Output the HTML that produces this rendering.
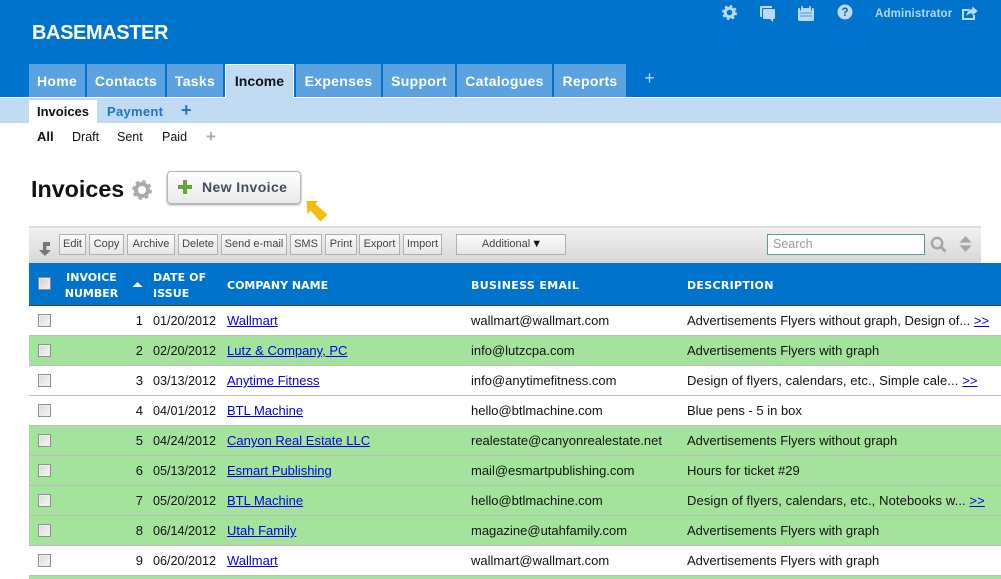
<!DOCTYPE html>
<html><head><meta charset="utf-8"><style>
*{box-sizing:border-box}
html,body{margin:0;padding:0;width:1001px;height:579px;overflow:hidden}
body{position:relative;background:#fff;font-family:"Liberation Sans",Arial,sans-serif;font-size:12px;color:#111}
.a{position:absolute;white-space:nowrap}
.tab{position:absolute;top:64px;height:33px;background:#5aa3e0;color:#fff;font-weight:bold;font-size:14px;letter-spacing:.3px;line-height:35px;text-align:center}
.btn{position:absolute;top:234px;height:21px;border:1px solid #b0b0b0;background:linear-gradient(#fbfbfb,#e6e6e6);color:#444;font-size:11px;line-height:19px;text-align:center}
.th{position:absolute;color:#fff;font:bold 11px/16px "DejaVu Sans",sans-serif;white-space:nowrap}
.row{position:absolute;left:29px;width:972px;height:30px;border-bottom:1px solid #bbb}
.g{background:#a3e39b}
.cb{position:absolute;left:9px;top:8px;width:13px;height:13px;border:1px solid #8f8f8f;background:linear-gradient(135deg,#d8d8d8,#f8f8f8);box-shadow:inset 0 0 0 1px #eee}
.c{position:absolute;top:0;line-height:29px;font-size:13px;white-space:nowrap}
.d{font-size:12.600px;line-height:31px}
.w{letter-spacing:.1px}
a{color:#00e;text-decoration:underline}
</style></head><body>
<div class="a" style="left:0;top:0;width:1001px;height:97px;background:#0074cc"></div>
<div class="a" style="left:32px;top:20px;color:#fff;font-weight:bold;font-size:20px;line-height:26px;letter-spacing:-.4px">BASEMASTER</div>

<svg class="a" style="left:722px;top:5px" width="15" height="15" viewBox="0 0 15 15"><circle cx="7.5" cy="7.5" r="4.3" fill="none" stroke="#bcdaf5" stroke-width="3"/><circle cx="7.500" cy="7.500" r="6.500" fill="none" stroke="#bcdaf5" stroke-width="2" stroke-dasharray="2.700 2.400"/></svg>
<svg class="a" style="left:759px;top:5px" width="18" height="18" viewBox="0 0 18 18"><path d="M2 1h10q1 0 1 1v1H4q-1 0-1 1v8H2q-1 0-1-1V2q0-1 1-1z" fill="#bcdaf5"/><path d="M5 4h10q1 0 1 1v8q0 1-1 1h-1v3l-3-3H5q-1 0-1-1V5q0-1 1-1z" fill="#bcdaf5"/></svg>
<svg class="a" style="left:797px;top:5px" width="18" height="16" viewBox="0 0 18 16"><rect x="1" y="3" width="16" height="13" rx="1.500" fill="#bcdaf5"/><path d="M5 1v4M13 1v4" stroke="#bcdaf5" stroke-width="1.500"/><path d="M3 8h12M3 11h12" stroke="#4c97d8" stroke-width="1"/><path d="M3.500 2.500v3M14.500 2.500v3" stroke="#0074cc" stroke-width="1"/></svg>
<svg class="a" style="left:837px;top:4px" width="16" height="16" viewBox="0 0 16 16"><circle cx="8" cy="8" r="7.5" fill="#bcdaf5"/><text x="8" y="12" text-anchor="middle" font-family="Liberation Sans" font-weight="bold" font-size="11.5" fill="#0a5fa8">?</text></svg>
<div class="a" style="left:875px;top:7px;color:#b5d6f3;font-weight:bold;font-size:11.500px;line-height:15px;letter-spacing:.15px">Administrator</div>
<svg class="a" style="left:961px;top:5px" width="18" height="16" viewBox="0 0 18 16"><path d="M12 5H2v9h11v-4" fill="none" stroke="#bcdaf5" stroke-width="2"/><path d="M11 1l6 5-6 5V8.500Q7 8.500 5 12 5.500 5 11 4z" fill="#bcdaf5" stroke="#0074cc" stroke-width=".5"/></svg>

<div class="tab" style="left:29px;width:56px">Home</div>
<div class="tab" style="left:87px;width:78px">Contacts</div>
<div class="tab" style="left:167px;width:56px">Tasks</div>
<div class="tab" style="left:296px;width:85px">Expenses</div>
<div class="tab" style="left:383px;width:72px">Support</div>
<div class="tab" style="left:457px;width:95px">Catalogues</div>
<div class="tab" style="left:554px;width:72px">Reports</div>
<div class="a" style="left:0;top:97px;width:1001px;height:26px;background:#c0daf2;border-top:1px solid #fff"></div>
<div class="tab" style="left:225px;width:69px;height:34px;background:#c0daf2;color:#111;border:1px solid #fff;border-bottom:0;line-height:33px;letter-spacing:.05px">Income</div>
<div class="a" style="left:643px;top:71px;width:13px;height:15px;color:#b5d6f3;font-size:18px;line-height:15px;text-align:center">+</div>

<div class="a" style="left:29px;top:100px;width:68px;height:23px;background:#fff;font-weight:bold;font-size:13px;line-height:23px;text-align:center;color:#111">Invoices</div>
<div class="a" style="left:107px;top:100px;color:#1b75c8;font-weight:bold;font-size:13px;line-height:23px;letter-spacing:.3px">Payment</div>
<div class="a" style="left:181px;top:102px;color:#1b75c8;font-weight:bold;font-size:18px;line-height:17px">+</div>

<div class="a" style="left:37px;top:129px;font-weight:bold;font-size:13px;line-height:16px">All</div>
<div class="a" style="left:72px;top:129px;font-size:12.500px;line-height:16px">Draft</div>
<div class="a" style="left:117px;top:129px;font-size:12.500px;line-height:16px">Sent</div>
<div class="a" style="left:162px;top:129px;font-size:12.500px;line-height:16px">Paid</div>
<div class="a" style="left:206px;top:128px;font-size:17px;font-weight:bold;line-height:17px;color:#aaa">+</div>

<div class="a" style="left:31px;top:175px;font-weight:bold;font-size:23.300px;line-height:29px;color:#111">Invoices</div>
<svg class="a" style="left:132px;top:180px" width="20" height="20" viewBox="0 0 20 20"><circle cx="10" cy="10" r="6" fill="none" stroke="#aaa" stroke-width="4"/><circle cx="10" cy="10" r="8.600" fill="none" stroke="#aaa" stroke-width="2.600" stroke-dasharray="3.400 3.350"/></svg>

<div class="a" style="left:167px;top:171px;width:134px;height:33px;border:1px solid #b5b5b5;border-radius:4px;background:linear-gradient(#fff,#e9e9e9);box-shadow:0 1px 2px #999"></div>
<svg class="a" style="left:178px;top:180px" width="14" height="14" viewBox="0 0 14 14"><path d="M5 0h4v5h5v4H9v5H5V9H0V5h5z" fill="#5cab35"/></svg>
<div class="a" style="left:202px;top:179px;font-weight:bold;font-size:14px;line-height:16px;letter-spacing:.4px;color:#444b5c">New Invoice</div>
<svg class="a" style="left:304px;top:199px" width="24" height="24" viewBox="0 0 24 24"><path d="M2.500 2L14 2 11.500 5 23.500 15.500 16.500 22.500 6.500 11.500 3.500 15.500z" fill="#f7bb0d"/></svg>

<div class="a" style="left:29px;top:226px;width:952px;height:37px;background:linear-gradient(#f1f1f1,#d6d6d6);border-top:2px solid #dedede"></div>
<svg class="a" style="left:38px;top:241px" width="14" height="15" viewBox="0 0 14 15"><path d="M5 1h7v4H8.500v4H13l-6 6-6-6h4z" fill="#777"/></svg>
<div class="btn" style="left:59px;width:27px">Edit</div>
<div class="btn" style="left:89px;width:35px">Copy</div>
<div class="btn" style="left:127px;width:48px">Archive</div>
<div class="btn" style="left:178px;width:40px">Delete</div>
<div class="btn" style="left:221px;width:66px">Send e-mail</div>
<div class="btn" style="left:290px;width:32px">SMS</div>
<div class="btn" style="left:325px;width:32px">Print</div>
<div class="btn" style="left:359px;width:41px">Export</div>
<div class="btn" style="left:403px;width:39px">Import</div>
<div class="btn" style="left:456px;width:110px;padding-left:2px">Additional<span style="color:#111;margin-left:1px">▼</span></div>
<div class="a" style="left:767px;top:234px;width:158px;height:21px;background:#fff;border:1px solid #5a9a9a;padding-left:5px;color:#999;font-size:12.500px;line-height:19px">Search</div>
<svg class="a" style="left:930px;top:236px" width="17" height="17" viewBox="0 0 18 18"><circle cx="7.500" cy="7.500" r="5.500" fill="none" stroke="#a5a5a5" stroke-width="2.500"/><path d="M11.500 11.500L16.500 16.500" stroke="#a5a5a5" stroke-width="3"/></svg>
<svg class="a" style="left:958px;top:236px" width="15" height="16" viewBox="0 0 15 17"><path d="M7.500 0L14 7H1zM1 10h13l-6.500 7z" fill="#a5a5a5"/></svg>

<div class="a" style="left:29px;top:263px;width:972px;height:43px;background:#0074cc;border-bottom:1px solid #444"></div>
<div class="a" style="left:38px;top:277px;width:13px;height:13px;border:1px solid #888;background:linear-gradient(135deg,#ccc,#f5f5f5);box-shadow:inset 0 0 0 1px #eee"></div>
<div class="th" style="left:59px;top:270px;width:65px;text-align:center">INVOICE<br>NUMBER</div>
<svg class="a" style="left:132px;top:282px" width="11" height="6" viewBox="0 0 11 6"><path d="M5.500 0L10.500 5H.5z" fill="#fff"/></svg>
<div class="th" style="left:153px;top:270px;letter-spacing:.1px">DATE OF<br>ISSUE</div>
<div class="th" style="left:227px;top:278px">COMPANY NAME</div>
<div class="th" style="left:471px;top:278px;letter-spacing:.35px">BUSINESS EMAIL</div>
<div class="th" style="left:687px;top:278px;letter-spacing:.3px">DESCRIPTION</div>

<div class="row" style="top:306px"><i class="cb"></i><span class="c" style="right:858px">1</span><span class="c d" style="left:124px">01/20/2012</span><span class="c" style="left:198px"><a>Wallmart</a></span><span class="c" style="left:442px">wallmart@wallmart.com</span><span class="c" style="left:658px">Advertisements Flyers without graph, Design of... <a>&gt;&gt;</a></span></div>
<div class="row g" style="top:336px"><i class="cb"></i><span class="c" style="right:858px">2</span><span class="c d" style="left:124px">02/20/2012</span><span class="c" style="left:198px"><a>Lutz &amp; Company, PC</a></span><span class="c" style="left:442px">info@lutzcpa.com</span><span class="c" style="left:658px">Advertisements Flyers with graph</span></div>
<div class="row" style="top:366px"><i class="cb"></i><span class="c" style="right:858px">3</span><span class="c d" style="left:124px">03/13/2012</span><span class="c" style="left:198px"><a>Anytime Fitness</a></span><span class="c" style="left:442px">info@anytimefitness.com</span><span class="c w" style="left:658px">Design of flyers, calendars, etc., Simple cale... <a>&gt;&gt;</a></span></div>
<div class="row" style="top:396px"><i class="cb"></i><span class="c" style="right:858px">4</span><span class="c d" style="left:124px">04/01/2012</span><span class="c" style="left:198px"><a>BTL Machine</a></span><span class="c" style="left:442px">hello@btlmachine.com</span><span class="c" style="left:658px">Blue pens - 5 in box</span></div>
<div class="row g" style="top:426px"><i class="cb"></i><span class="c" style="right:858px">5</span><span class="c d" style="left:124px">04/24/2012</span><span class="c" style="left:198px"><a>Canyon Real Estate LLC</a></span><span class="c" style="left:442px">realestate@canyonrealestate.net</span><span class="c" style="left:658px">Advertisements Flyers without graph</span></div>
<div class="row g" style="top:456px"><i class="cb"></i><span class="c" style="right:858px">6</span><span class="c d" style="left:124px">05/13/2012</span><span class="c" style="left:198px"><a>Esmart Publishing</a></span><span class="c" style="left:442px">mail@esmartpublishing.com</span><span class="c" style="left:658px">Hours for ticket #29</span></div>
<div class="row g" style="top:486px"><i class="cb"></i><span class="c" style="right:858px">7</span><span class="c d" style="left:124px">05/20/2012</span><span class="c" style="left:198px"><a>BTL Machine</a></span><span class="c" style="left:442px">hello@btlmachine.com</span><span class="c w" style="left:658px">Design of flyers, calendars, etc., Notebooks w... <a>&gt;&gt;</a></span></div>
<div class="row g" style="top:516px"><i class="cb"></i><span class="c" style="right:858px">8</span><span class="c d" style="left:124px">06/14/2012</span><span class="c" style="left:198px"><a>Utah Family</a></span><span class="c" style="left:442px">magazine@utahfamily.com</span><span class="c" style="left:658px">Advertisements Flyers with graph</span></div>
<div class="row" style="top:546px"><i class="cb"></i><span class="c" style="right:858px">9</span><span class="c d" style="left:124px">06/20/2012</span><span class="c" style="left:198px"><a>Wallmart</a></span><span class="c" style="left:442px">wallmart@wallmart.com</span><span class="c" style="left:658px">Advertisements Flyers with graph</span></div>
<div class="row g" style="top:576px;height:3px;border:0"></div>
</body></html>
